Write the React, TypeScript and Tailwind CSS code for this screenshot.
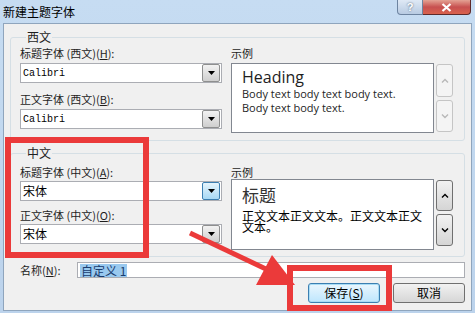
import React from "react";

const cjk = "font-['Noto_Sans_CJK_SC',sans-serif]";

const Arrow = ({ active }: { active?: boolean }) => (
  <div
    className={`w-[18px] h-[18px] mr-[1px] flex items-center justify-center border rounded-[2px] ${
      active
        ? "border-[#3c7fb1] bg-gradient-to-b from-[#e5f4fc] to-[#a7d9f5]"
        : "border-[#8e8f8f] bg-gradient-to-b from-[#f2f2f2] to-[#cfcfcf]"
    }`}
  >
    <svg width="7" height="4" viewBox="0 0 7 4">
      <path d="M0 0h7L3.5 4z" fill="#000" />
    </svg>
  </div>
);

const Dropdown = ({ value, mono, active }: { value: string; mono?: boolean; active?: boolean }) => (
  <div className="h-[20px] w-[202px] bg-white border border-[#abadb3] flex items-center justify-between">
    <span
      className={
        mono
          ? "pl-[2px] text-[10px] font-['Liberation_Mono',monospace] text-black"
          : `pl-[2px] text-[12px] ${cjk} text-black`
      }
    >
      {value}
    </span>
    <Arrow active={active} />
  </div>
);

const Label = ({ text, k }: { text: string; k: string }) => (
  <div className={`h-[14px] leading-[14px] text-[11px] ${cjk} text-[#1e1e1e]`}>
    {text}(<u>{k}</u>):
  </div>
);

const ScrollBtn = ({ dir, enabled, h }: { dir: "up" | "down"; enabled?: boolean; h: string }) => (
  <div
    className={`w-[17px] ${h} rounded-[3px] border flex items-center justify-center ${
      enabled
        ? "border-[#707070] bg-gradient-to-b from-[#f2f2f2] to-[#d5d5d5]"
        : "border-[#c5c5c5] bg-[#f4f4f4]"
    }`}
  >
    <svg width="8" height="5" viewBox="0 0 8 5">
      <path
        d={dir === "up" ? "M1 4.5L4 1.5L7 4.5" : "M1 0.5L4 3.5L7 0.5"}
        fill="none"
        stroke={enabled ? "#000" : "#b8b8b8"}
        strokeWidth="1.4"
      />
    </svg>
  </div>
);

type Row = { label: string; k: string; value: string; active?: boolean };

// spacing differs slightly between the two groups in the original dialog
const spacing = {
  west: { l1: "mt-[2px]", d: "mt-[3px]", l2: "mt-[9px]", pv: "mt-[3px] h-[70px]", pb: "pb-[7px]", sb: ["h-[33px]", "h-[32px]"] },
  east: { l1: "mt-[5px]", d: "mt-[2px]", l2: "mt-[7px]", pv: "mt-0 h-[71px]", pb: "pb-[6px]", sb: ["h-[31px]", "h-[32px]"] },
};

const Group = ({
  title,
  rows,
  preview,
  enabled,
}: {
  title: string;
  rows: Row[];
  preview: React.ReactNode;
  enabled?: boolean;
}) => {
  const s = enabled ? spacing.east : spacing.west;
  return (
    <fieldset className={`border border-[#d5dfe5] rounded-[3px] pl-[9px] pr-[11px] ${s.pb}`}>
      <legend className={`ml-[6px] px-[1px] text-[12px] leading-[14px] ${cjk} text-[#1e1e1e]`}>
        {title}
      </legend>
      <div className="flex justify-between">
        <div className="flex flex-col">
          <div className={s.l1}>
            <Label text={rows[0].label} k={rows[0].k} />
          </div>
          <div className={s.d}>
            <Dropdown value={rows[0].value} mono={!enabled} active={rows[0].active} />
          </div>
          <div className={s.l2}>
            <Label text={rows[1].label} k={rows[1].k} />
          </div>
          <div className={s.d}>
            <Dropdown value={rows[1].value} mono={!enabled} />
          </div>
        </div>
        <div className={`flex flex-col ${s.l1}`}>
          <div className={`h-[14px] leading-[14px] text-[11px] ${cjk} text-[#1e1e1e]`}>示例</div>
          <div className={`flex gap-[2px] ${s.pv}`}>
            <div className="w-[203px] h-full bg-white border border-[#828790] overflow-hidden pl-[10px] pt-[3px]">
              {preview}
            </div>
            <div className="flex flex-col gap-[3px] pt-[1px]">
              <ScrollBtn dir="up" enabled={enabled} h={s.sb[0]} />
              <ScrollBtn dir="down" enabled={enabled} h={s.sb[1]} />
            </div>
          </div>
        </div>
      </div>
    </fieldset>
  );
};

export default function App() {
  return (
    <div className="relative w-[475px] h-[313px] overflow-hidden bg-gradient-to-b from-[#c6dcf2] to-[#bcd3ec] flex flex-col">
      {/* title bar */}
      <div className="h-[23px] shrink-0 flex justify-between pl-[3px] pr-[4px]">
        <div className={`mt-[4px] text-[12px] leading-[16px] ${cjk} text-black`}>新建主题字体</div>
        <div className="flex h-[15px]">
          <div className="w-[26px] h-[15px] rounded-bl-[4px] border border-t-0 border-[#6d84a0] bg-gradient-to-b from-[#dfe9f5] to-[#b8cbe2] flex items-center justify-center text-[11px] leading-none font-bold text-white font-['Liberation_Sans',sans-serif] [text-shadow:0_0_2px_#44546a]">
            ?
          </div>
          <div className="w-[48px] h-[15px] rounded-br-[4px] border border-l-0 border-t-0 border-[#5e2a2a] bg-gradient-to-b from-[#e3a294] via-[#c75050] to-[#d9624e] flex items-center justify-center">
            <svg width="11" height="9" viewBox="0 0 11 9">
              <path d="M1.5 1L9.5 8M9.5 1L1.5 8" stroke="#fff" strokeWidth="2.2" />
            </svg>
          </div>
        </div>
      </div>

      {/* dialog body */}
      <div className="mx-[3px] h-[288px] shrink-0 bg-[#f0f0f0] border border-[#8fa5bd] flex flex-col pl-[6px] pr-[6px] pt-[6px]">
        <Group
          title="西文"
          rows={[
            { label: "标题字体 (西文)", k: "H", value: "Calibri" },
            { label: "正文字体 (西文)", k: "B", value: "Calibri" },
          ]}
          preview={
            <div className="font-['Open_Sans',sans-serif] text-[#1e1e1e]">
              <div className="text-[16px] leading-[20px]">Heading</div>
              <div className="text-[11px] leading-[14px]">Body text body text body text.</div>
              <div className="text-[11px] leading-[14px]">Body text body text.</div>
            </div>
          }
        />
        <div className="mt-[5px]">
          <Group
            title="中文"
            enabled
            rows={[
              { label: "标题字体 (中文)", k: "A", value: "宋体", active: true },
              { label: "正文字体 (中文)", k: "O", value: "宋体" },
            ]}
            preview={
              <div className={`${cjk} text-black`}>
                <div className="text-[17px] leading-[24px] text-[#333]">标题</div>
                <div className="text-[12px] leading-[11px] mt-[3px]">正文文本正文文本。正文文本正文文本。</div>
              </div>
            }
          />
        </div>

        {/* name row */}
        <div className="mt-[5px] flex items-center">
          <div className={`w-[67px] pl-[10px] text-[11px] ${cjk} text-[#1e1e1e]`}>
            名称(<u>N</u>):
          </div>
          <div className="flex-1 h-[16px] bg-white border border-[#abadb3] flex items-center pl-[2px]">
            <span className={`bg-[#99c9ef] text-[12px] leading-[13px] ${cjk} text-[#1a3c6e] px-[1px]`}>
              自定义 1
            </span>
          </div>
        </div>

        {/* buttons */}
        <div className="mt-[4px] flex justify-end gap-[13px]">
          <button className={`w-[72px] h-[20px] rounded-[3px] border border-[#3c7fb1] bg-gradient-to-b from-[#eaf6fd] to-[#bee6fd] text-[12px] ${cjk} text-black shadow-[inset_0_0_0_1px_#a9dcf5]`}>
            保存(<u>S</u>)
          </button>
          <button className={`w-[72px] h-[20px] rounded-[3px] border border-[#707070] bg-gradient-to-b from-[#f2f2f2] to-[#d6d6d6] text-[12px] ${cjk} text-black`}>
            取消
          </button>
        </div>
      </div>

      {/* red annotations */}
      <div className="absolute left-[5px] top-[137px] w-[144px] h-[121px] border-[6px] border-[#eb3a3a]" />
      <div className="absolute left-[287px] top-[265px] w-[105px] h-[46px] border-[6px] border-[#eb3a3a]" />
      <svg className="absolute left-0 top-0 pointer-events-none" width="475" height="313">
        <line x1="190" y1="233" x2="268" y2="270" stroke="#eb3a3a" strokeWidth="5" />
        <polygon points="295,285 256,285 272,255" fill="#eb3a3a" />
      </svg>
    </div>
  );
}
